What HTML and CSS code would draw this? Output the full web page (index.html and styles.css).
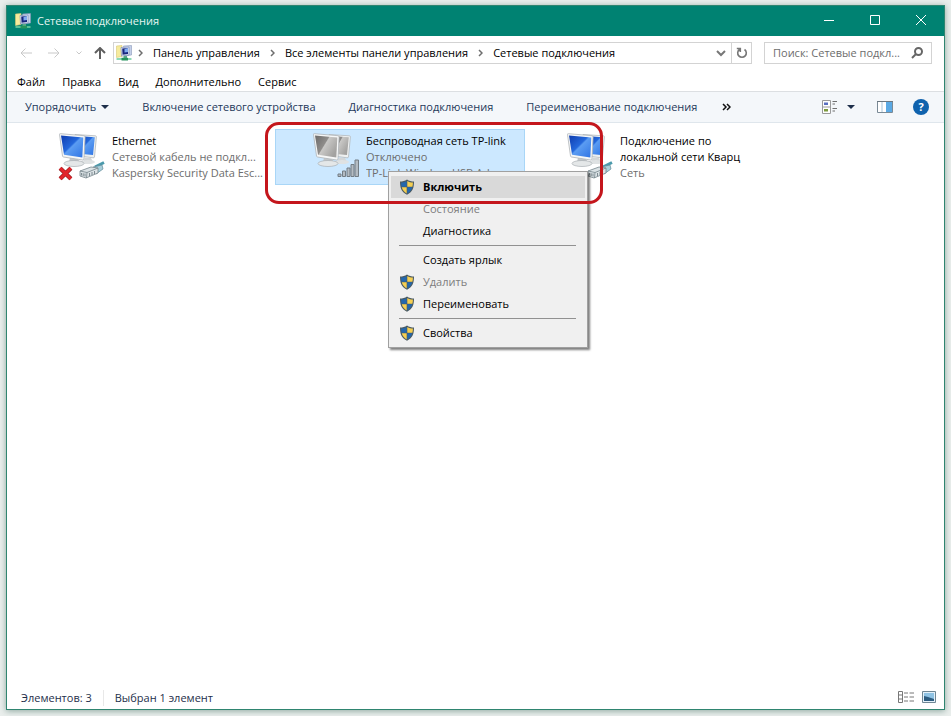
FILE: index.html
```html
<!DOCTYPE html>
<html lang="ru">
<head>
    <meta charset="UTF-8">
    <meta name="viewport" content="width=device-width, initial-scale=1.0">
    <title>Сетевые подключения</title>
    <link rel="stylesheet" href="styles.css">
</head>
<body>

<svg class="sprite" aria-hidden="true">
    <defs>
        <linearGradient id="screenBlue" x1="0" y1="0" x2="1" y2="1">
            <stop offset="0" stop-color="#0f3cae"/>
            <stop offset="0.45" stop-color="#2468dc"/>
            <stop offset="0.5" stop-color="#5b9cf2"/>
            <stop offset="1" stop-color="#2f74e4"/>
        </linearGradient>
        <linearGradient id="screenGray" x1="0" y1="0" x2="1" y2="0.6">
            <stop offset="0" stop-color="#6c6a69"/>
            <stop offset="0.48" stop-color="#8f8d8b"/>
            <stop offset="0.52" stop-color="#c9c8c6"/>
            <stop offset="1" stop-color="#a3a2a0"/>
        </linearGradient>
        <symbol id="shield" viewBox="0 0 16 16">
            <path d="M8 0.5C6 2 3.500 2.500 1 2.500C1 8 2 13 8 15.700C14 13 15 8 15 2.500C12.500 2.500 10 2 8 0.500Z" fill="#4a5a62"/>
            <path d="M7.700 2C6 3 4 3.500 2.100 3.600C2.100 5 2.200 6.500 2.600 7.800H7.700Z" fill="#2367ad"/>
            <path d="M8.300 2C10 3 12 3.500 13.900 3.600C13.900 5 13.800 6.500 13.400 7.800H8.300Z" fill="#f5cf52"/>
            <path d="M2.800 8.300H7.700V14.400C5 13 3.500 11 2.800 8.300Z" fill="#f5cf52"/>
            <path d="M13.200 8.300H8.300V14.400C11 13 12.500 11 13.200 8.300Z" fill="#2367ad"/>
        </symbol>
        <symbol id="netfolder" viewBox="0 0 16 16">
            <path d="M0.500 1L6 0.500V11.500L0.500 12.500Z" fill="#f6eb9c" stroke="#d8c774" stroke-width="0.6"/>
            <path d="M7.500 1L15.500 0.500V10L8.500 11Z" fill="#c4d0ea" stroke="#8a99b8" stroke-width="0.6"/>
            <path d="M5 2.500L13 2V10L5.500 11Z" fill="#e9eef8" stroke="#6a7cae" stroke-width="0.6"/>
            <path d="M6.200 3.500L12 3V9L6.500 9.800Z" fill="#17257e"/>
            <path d="M8.500 4L12 3V7L8.500 7.500Z" fill="#7fa9ee"/>
            <path d="M7.500 11H11V13H7.500Z" fill="#5ba985"/>
            <path d="M0.500 13.200H15.500V14.800H0.500Z" fill="#6fd0a2"/>
            <path d="M5.500 12.800H12V15.500H5.500Z" fill="#25935c"/>
        </symbol>
        <symbol id="pcs" viewBox="0 0 48 48">
            <path d="M17 1.500L37.500 2.800Q38.500 3 38.400 4L36.500 24Q36.300 25 35 24.800L22 23Z" fill="#eef0f0" stroke="#b3b9bd" stroke-width="0.8"/>
            <path class="screen" d="M19 3L36.800 4.300L35 22L24 21Z"/>
            <path d="M27 24.500L33 25L35 29L25 30Z" fill="#d3d6d8"/>
            <ellipse cx="30" cy="29" rx="7" ry="2" fill="#dfe2e3"/>
            <path d="M12 24L20 26L22 30L11 30Z" fill="#c2c6c9"/>
            <ellipse cx="16" cy="30.500" rx="10" ry="3" fill="#e4e7e8" stroke="#a9afb3" stroke-width="0.7"/>
            <path d="M1.500 1.500Q1.300 0.600 2.500 0.700L26 2.700Q27.200 2.900 27.100 4L26 26Q25.900 27.200 24.700 27L5.500 24Q4.600 23.800 4.500 23Z" fill="#f6f7f7" stroke="#aeb4b8" stroke-width="0.8"/>
            <path class="screen" d="M3 2.500L25.300 4.500L24.300 24.500L6 21.700Z"/>
        </symbol>
        <symbol id="plug" viewBox="0 0 28 20">
            <path d="M17 6L26 1.500" stroke="#4a9aac" stroke-width="3"/>
            <path d="M15 6L24 4L25 8L18 13Z" fill="#a9cfdb" stroke="#5d8896" stroke-width="0.7"/>
            <path d="M2 10L13 6L20 7L20 12L8 17L2 15Z" fill="#dbe2e5" stroke="#76858c" stroke-width="0.8"/>
            <path d="M2 10L9 11.500L20 7M9 11.500L8.500 17" fill="none" stroke="#76858c" stroke-width="0.8"/>
            <path d="M3.500 12V14.500M5.200 12.300V15M7 12.500V15.500M11.500 12V15M14 11V14M16.500 10V13" stroke="#66757b" stroke-width="0.8"/>
        </symbol>
    </defs>
</svg>

<div class="window">
    <header class="titlebar">
        <svg class="icon16"><use href="#netfolder"/></svg>
        <h1>Сетевые подключения</h1>
        <div class="window-buttons">
            <button type="button" aria-label="Свернуть"><svg viewBox="0 0 12 12"><path d="M1 5.500H11"/></svg></button>
            <button type="button" aria-label="Развернуть"><svg viewBox="0 0 12 12"><path d="M1.500 0.500H10.500V9.500H1.500Z"/></svg></button>
            <button type="button" aria-label="Закрыть"><svg viewBox="0 0 12 12"><path d="M1 0L11 10M11 0L1 10"/></svg></button>
        </div>
    </header>

    <div class="nav">
        <div class="nav-buttons">
            <button type="button" aria-label="Назад" disabled><svg viewBox="0 0 12 12"><path d="M12 6H1M5.500 1.500L1 6L5.500 10.500"/></svg></button>
            <button type="button" aria-label="Вперёд" disabled><svg viewBox="0 0 12 12"><path d="M0 6H11M6.500 1.500L11 6L6.500 10.500"/></svg></button>
            <button type="button" class="small" aria-label="Последние расположения" disabled><svg viewBox="0 0 6 12"><path d="M0.500 4.500L3 7L5.500 4.500"/></svg></button>
            <button type="button" class="up" aria-label="Вверх"><svg viewBox="0 0 12 12"><path d="M6 12V1.500M1 6L6 1L11 6"/></svg></button>
        </div>
        <div class="address">
            <svg class="icon16"><use href="#netfolder"/></svg>
            <nav class="crumbs">
                <svg class="sep" viewBox="0 0 5 8"><path d="M1 1L4 4L1 7"/></svg>
                <a href="#">Панель управления</a>
                <svg class="sep" viewBox="0 0 5 8"><path d="M1 1L4 4L1 7"/></svg>
                <a href="#">Все элементы панели управления</a>
                <svg class="sep" viewBox="0 0 5 8"><path d="M1 1L4 4L1 7"/></svg>
                <a href="#">Сетевые подключения</a>
            </nav>
            <button type="button" aria-label="Предыдущие расположения"><svg viewBox="0 0 10 10"><path d="M1 3L5 7L9 3" stroke-width="2"/></svg></button>
            <button type="button" class="refresh" aria-label="Обновить"><svg viewBox="0 0 12 12"><path d="M8.500 2.500A4.300 4.300 0 1 1 3.500 2.500M0.800 1.500H4.300V5" stroke-width="1.600"/></svg></button>
        </div>
        <div class="search">
            <input type="text" aria-label="Поиск" placeholder="Поиск: Сетевые подкл...">
            <svg viewBox="0 0 12 12"><circle cx="7.500" cy="4.500" r="3.500"/><path d="M5 7L1 11"/></svg>
        </div>
    </div>

    <nav class="menubar">
        <button type="button">Файл</button>
        <button type="button">Правка</button>
        <button type="button">Вид</button>
        <button type="button">Дополнительно</button>
        <button type="button">Сервис</button>
    </nav>

    <div class="toolbar">
        <button type="button">Упорядочить<svg class="caret" viewBox="0 0 8 4"><path d="M0 0H8L4 4Z"/></svg></button>
        <button type="button">Включение сетевого устройства</button>
        <button type="button">Диагностика подключения</button>
        <button type="button">Переименование подключения</button>
        <button type="button" class="more" aria-label="Ещё"><svg viewBox="0 0 9 8"><path d="M1 1L4 4L1 7M5 1L8 4L5 7"/></svg></button>
        <div class="toolbar-right">
            <button type="button" aria-label="Вид">
                <svg class="icon16" viewBox="0 0 16 16">
                    <path d="M0.500 1.500H8.500V14.500H0.500ZM0.500 8H8.500" fill="#fff" stroke="#9a9a9a"/>
                    <path d="M2 3.500H6V6H2Z" fill="#5a6fc0"/>
                    <path d="M2 10H6V12.500H2Z" fill="#7c9a3c"/>
                    <path d="M10.500 2.500H15M10.500 5H13M10.500 9.500H15M10.500 12H13" stroke="#707070"/>
                </svg>
            </button>
            <button type="button" aria-label="Другие представления"><svg class="caret" viewBox="0 0 8 4"><path d="M0 0H8L4 4Z"/></svg></button>
            <button type="button" class="preview" aria-label="Область просмотра">
                <svg class="icon16" viewBox="0 0 16 16">
                    <path d="M0.500 2.500H15.500V13.500H0.500Z" fill="#fff" stroke="#7a8a96"/>
                    <path d="M5 3V13" stroke="#a9c4d8"/>
                    <path d="M9 3H15V13H9Z" fill="#5aa9e4"/>
                    <path d="M0 2.500H16" stroke="#6c7881"/>
                </svg>
            </button>
            <button type="button" class="help" aria-label="Справка">?</button>
        </div>
    </div>

    <main class="content">
        <ul class="connections">
            <li class="connection">
                <div class="thumb">
                    <svg class="pcs"><use href="#pcs"/></svg>
                    <svg class="cross" viewBox="0 0 14 14"><path d="M2 2L12 12M12 2L2 12" stroke="#8f1418" stroke-width="4"/><path d="M2 2L12 12M12 2L2 12" stroke="#e2252b" stroke-width="2.800"/></svg>
                    <svg class="plug"><use href="#plug"/></svg>
                </div>
                <div class="info">
                    <span class="name">Ethernet</span>
                    <span>Сетевой кабель не подкл...</span>
                    <span>Kaspersky Security Data Esc...</span>
                </div>
            </li>
            <li class="connection selected">
                <div class="thumb">
                    <svg class="pcs off"><use href="#pcs"/></svg>
                    <svg class="signal" viewBox="0 0 22 18">
                        <path d="M1 15H4V17.500H1ZM5.500 12H8.500V17.500H5.500ZM10 9H13V17.500H10ZM14 5.500H17V17.500H14ZM18 1H21.500V17.500H18Z"/>
                    </svg>
                </div>
                <div class="info">
                    <span class="name">Беспроводная сеть TP-link</span>
                    <span>Отключено</span>
                    <span>TP-Link Wireless USB Ad...</span>
                </div>

                <div class="context-menu" role="menu">
                    <button type="button" role="menuitem" class="active"><svg><use href="#shield"/></svg>Включить</button>
                    <button type="button" role="menuitem" disabled>Состояние</button>
                    <button type="button" role="menuitem">Диагностика</button>
                    <hr>
                    <button type="button" role="menuitem">Создать ярлык</button>
                    <button type="button" role="menuitem" disabled><svg><use href="#shield"/></svg>Удалить</button>
                    <button type="button" role="menuitem"><svg><use href="#shield"/></svg>Переименовать</button>
                    <hr>
                    <button type="button" role="menuitem"><svg><use href="#shield"/></svg>Свойства</button>
                </div>
                <div class="highlight"></div>
            </li>
            <li class="connection">
                <div class="thumb">
                    <svg class="pcs"><use href="#pcs"/></svg>
                    <svg class="plug"><use href="#plug"/></svg>
                </div>
                <div class="info">
                    <span class="name wrap">Подключение по локальной сети Кварц</span>
                    <span>Сеть</span>
                </div>
            </li>
        </ul>
    </main>

    <footer class="statusbar">
        <span>Элементов: 3</span>
        <span class="picked">Выбран 1 элемент</span>
        <div class="views">
            <button type="button" aria-label="Таблица">
                <svg viewBox="0 0 16 12"><path d="M0.500 0.500H4.500V11.500H0.500ZM0.500 4H4.500M0.500 8H4.500M6 2H10M11.500 2H16M6 6H10M11.500 6H16M6 10H10M11.500 10H16" stroke="#777"/></svg>
            </button>
            <button type="button" aria-label="Крупные значки">
                <svg viewBox="0 0 14 12"><path d="M0.500 0.500H13.500V11.500H0.500Z" fill="#e4f1fa" stroke="#6f8794"/><path d="M2 2H12V10H2Z" fill="#8fc3e4"/><path d="M2 5L6 6L12 8V10H2Z" fill="#2c5c80"/></svg>
            </button>
        </div>
    </footer>
</div>

</body>
</html>
```

FILE: styles.css
```css
* {
    box-sizing: border-box;
}

body {
    margin: 0;
    padding: 5px 6px 6px;
    min-height: 100vh;
    display: flex;
    background-color: #e9eeec;
    font-family: "Open Sans", "Noto Sans", sans-serif;
    font-size: 11px;
    line-height: 16px;
    color: #000;
}

button {
    display: flex;
    align-items: center;
    justify-content: center;
    padding: 0;
    border: none;
    background: none;
    font: inherit;
    color: inherit;
    white-space: nowrap;
}

svg {
    display: block;
    flex: none;
    fill: none;
}

.sprite {
    position: absolute;
    width: 0;
    height: 0;
}

.icon16 {
    width: 16px;
    height: 16px;
}

.window {
    flex: 1;
    min-width: 0;
    display: flex;
    flex-direction: column;
    background-color: #fff;
    border: 1px solid #2f8570;
    box-shadow: 0 1px 6px rgba(0, 60, 45, 0.4);
}

/* Title bar */
.titlebar {
    display: flex;
    align-items: center;
    height: 30px;
    padding-left: 8px;
    background-color: #008272;
    color: #e4f5f1;
}

.titlebar h1 {
    flex: 1;
    margin: 0 0 0 6px;
    font-size: 11px;
    font-weight: normal;
}

.window-buttons {
    display: flex;
}

.window-buttons button {
    width: 46px;
    height: 30px;
}

.window-buttons svg {
    width: 12px;
    height: 12px;
    stroke: #fff;
}

/* Address row */
.nav {
    display: flex;
    align-items: center;
    height: 35px;
    padding: 0 12px 2px 13px;
}

.nav-buttons {
    display: flex;
    align-items: center;
    gap: 16px;
    margin-right: 7px;
}

.nav-buttons svg {
    width: 12px;
    height: 12px;
    stroke: #5f5f5f;
    stroke-width: 2;
}

.nav-buttons button:disabled svg {
    stroke: #c8c8c8;
    stroke-width: 1;
}

.nav-buttons .small svg {
    width: 6px;
}

.nav-buttons .up {
    margin-left: -4px;
}

.address {
    flex: 1;
    min-width: 0;
    display: flex;
    align-items: center;
    height: 22px;
    padding-left: 2px;
    border: 1px solid #d3d3d3;
}

.crumbs {
    flex: 1;
    display: flex;
    align-items: center;
    gap: 10px;
    padding-left: 6px;
    overflow: hidden;
    white-space: nowrap;
}

.crumbs a {
    color: #000;
    text-decoration: none;
}

.crumbs .sep {
    width: 5px;
    height: 8px;
    stroke: #6e6e6e;
    stroke-width: 1.5;
}

.address button {
    width: 20px;
    height: 20px;
}

.address button svg {
    width: 10px;
    height: 10px;
    stroke: #777;
}

.address .refresh {
    border-left: 1px solid #d3d3d3;
}

.address .refresh svg {
    width: 12px;
    height: 12px;
}

.search {
    display: flex;
    align-items: center;
    width: 168px;
    height: 22px;
    margin-left: 12px;
    padding: 0 8px;
    border: 1px solid #d3d3d3;
}

.search input {
    flex: 1;
    min-width: 0;
    padding: 0;
    border: none;
    outline: none;
    background: none;
    font: inherit;
}

.search input::placeholder {
    color: #6d6d6d;
}

.search svg {
    width: 12px;
    height: 12px;
    stroke: #666;
    stroke-width: 2;
}

/* Menu and command bar */
.menubar {
    display: flex;
    align-items: center;
    gap: 17px;
    height: 20px;
    padding: 2px 0 0 10px;
}

.toolbar {
    display: flex;
    align-items: center;
    gap: 33px;
    height: 32px;
    padding: 0 15px 0 18px;
    background-color: #f4f7fa;
    border-top: 1px solid #dcdfe2;
    border-bottom: 1px solid #dfe6ec;
    color: #1e395b;
}

.caret {
    width: 8px;
    height: 4px;
    fill: #1e2f4a;
}

.toolbar button .caret {
    margin-left: 5px;
}

.more svg {
    width: 9px;
    height: 8px;
    margin-left: -8px;
    stroke: #111;
    stroke-width: 1.5;
}

.toolbar-right {
    display: flex;
    align-items: center;
    margin-left: auto;
    gap: 4px;
}

.preview {
    margin: 0 16px 0 18px;
}

.toolbar-right .help {
    width: 16px;
    height: 16px;
    border-radius: 50%;
    background-color: #0f62ad;
    color: #fff;
    font-weight: bold;
}

/* Connections */
.content {
    flex: 1;
}

.connections {
    display: flex;
    flex-wrap: wrap;
    gap: 4px;
    margin: 0;
    padding: 6px 14px;
    list-style: none;
}

.connection {
    position: relative;
    display: flex;
    gap: 6px;
    width: 250px;
    height: 56px;
    padding: 4px 6px 4px 37px;
}

.connection.selected {
    background-color: #cce8ff;
    box-shadow: inset 0 0 0 1px #a9d6f7;
    z-index: 1;
}

.thumb {
    position: relative;
    flex: none;
    width: 48px;
    height: 48px;
}

.pcs {
    width: 48px;
    height: 48px;
    fill: url(#screenBlue);
}

.pcs.off {
    fill: url(#screenGray);
}

.cross {
    position: absolute;
    left: 0;
    bottom: 0;
    width: 15px;
    height: 15px;
}

.plug {
    position: absolute;
    right: 0;
    bottom: 0;
    width: 28px;
    height: 20px;
}

.signal {
    position: absolute;
    right: 1px;
    bottom: 4px;
    width: 22px;
    height: 18px;
    fill: #b4bcc3;
    stroke: #737d85;
    stroke-width: 1;
}

.info {
    flex: 1;
    min-width: 0;
    color: #6d6d6d;
}

.info span {
    display: block;
    overflow: hidden;
    white-space: nowrap;
    text-overflow: ellipsis;
}

.info .name {
    color: #000;
}

.info .wrap {
    width: 136px;
    white-space: normal;
}

/* Context menu */
.context-menu {
    position: absolute;
    left: 113px;
    top: 42px;
    width: 200px;
    padding: 4px 2px 3px;
    background-color: #f0f0f0;
    border: 1px solid #a0a0a0;
    box-shadow: 2px 2px 2px rgba(0, 0, 0, 0.5);
}

.context-menu button {
    position: relative;
    justify-content: flex-start;
    width: 100%;
    height: 22px;
    padding-left: 32px;
}

.context-menu button svg {
    position: absolute;
    left: 8px;
    width: 16px;
    height: 16px;
}

.context-menu .active {
    background-color: #d9d9d9;
    font-weight: bold;
}

.context-menu button:disabled {
    color: #7d7d7d;
}

.context-menu hr {
    margin: 3px 9px 3px 8px;
    border: none;
    border-top: 1px solid #919191;
}

.highlight {
    position: absolute;
    left: -10px;
    top: -7px;
    width: 338px;
    height: 82px;
    border: 3px solid #c4161c;
    border-radius: 14px;
    pointer-events: none;
}

/* Status bar */
.statusbar {
    display: flex;
    align-items: center;
    height: 24px;
    padding: 2px 7px 0 14px;
    color: #1e2f4a;
}

.picked {
    margin-left: 11px;
    padding-left: 11px;
    border-left: 1px solid #e8e8e8;
}

.views {
    display: flex;
    gap: 7px;
    margin: 0 0 2px auto;
}

.views svg {
    width: 16px;
    height: 12px;
}
```
